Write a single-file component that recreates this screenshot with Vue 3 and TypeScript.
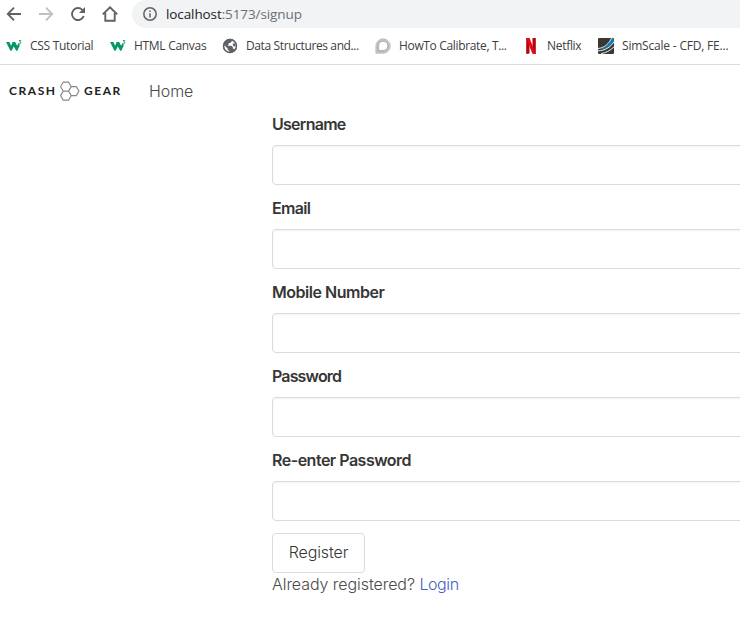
<script setup lang="ts">
interface Bookmark {
  icon: 'w3' | 'globe' | 'calibrate' | 'netflix' | 'simscale'
  label: string
  width: number
}

const bookmarks: Bookmark[] = [
  { icon: 'w3', label: 'CSS Tutorial', width: 104 },
  { icon: 'w3', label: 'HTML Canvas', width: 112 },
  { icon: 'globe', label: 'Data Structures and...', width: 153 },
  { icon: 'calibrate', label: 'HowTo Calibrate, T...', width: 148 },
  { icon: 'netflix', label: 'Netflix', width: 75 },
  { icon: 'simscale', label: 'SimScale - CFD, FE...', width: 148 },
]

const fields = [
  { id: 'username', label: 'Username', type: 'text' },
  { id: 'email', label: 'Email', type: 'email' },
  { id: 'mobile', label: 'Mobile Number', type: 'tel' },
  { id: 'password', label: 'Password', type: 'password' },
  { id: 'confirm', label: 'Re-enter Password', type: 'password' },
]
</script>

<template>
  <div class="window">
    <header class="toolbar">
      <div class="controls">
        <svg viewBox="0 0 16 16"><path d="M15 8H2M8 1.7 1.8 8 8 14.3" /></svg>
        <svg class="disabled" viewBox="0 0 16 16"><path d="M1 8h13M8 1.7 14.2 8 8 14.3" /></svg>
        <svg viewBox="0 0 16 16"><path d="M13.7 10a6 6 0 1 1-1.4-6.2L14 5.5" /><path class="solid" d="M15 1v6H9z" /></svg>
        <svg viewBox="0 0 16 16"><path d="M.8 8.4 8 1.3l7.2 7.1M3.3 7v7.7h9.4V7" /></svg>
      </div>
      <div class="address">
        <svg viewBox="0 0 14 14"><circle cx="7" cy="7" r="6.2" /><path d="M7 6.2v4.3M7 3.4v1.5" /></svg>
        <span class="url">localhost<span class="path">:5173/signup</span></span>
      </div>
    </header>

    <nav class="bookmarks">
      <a v-for="b in bookmarks" :key="b.label" class="bookmark" :style="{ width: b.width + 'px' }">
        <svg v-if="b.icon === 'w3'" viewBox="0 0 16 16">
          <path d="M0 4h3.4l1.7 3.8L6.6 4h2.6l1.9 3.7L12.6 5l1.2 2.4-2.5 5.3h-1.1L7.8 8.6 5.6 12.7H4.4z" fill="#059862" />
          <path d="M12.8 2.6h2.1l-1.2 1.3c1.9.1 1.5 2.4-.8 1.8" fill="none" stroke="#059862" stroke-width=".9" />
        </svg>
        <svg v-else-if="b.icon === 'globe'" viewBox="0 0 16 16">
          <circle cx="8" cy="8" r="7.2" fill="#5f6368" />
          <path d="M9.7 2.4v1.2L8.2 5H6.7v1.6L5.3 7.7h4.1l1.5 1.5v1.6h1.3l1 .8c2-3.4.5-8-3.5-9.2zM2.3 7.2l3.4 3.2v1.4l1.7 1.3v1.1C4.1 14 1.6 10.8 2.3 7.2z" fill="#fff" />
          <path d="M10.5 5.5h3v3h-2zM8.6 11l3.4.5-2.8 2.4z" fill="#5f6368" />
          <circle cx="8" cy="8" r="6.5" fill="none" stroke="#5f6368" stroke-width="1.4" />
        </svg>
        <svg v-else-if="b.icon === 'calibrate'" viewBox="0 0 16 16">
          <path d="M.9 15.2V7.8A7.2 7.2 0 1 1 8 15.2z" fill="#ccc" stroke="#b5b5b5" stroke-width=".8" />
          <path d="M2.9 13.2V8A5.1 5.1 0 1 1 8 13.2H2.9" fill="none" stroke="#999" stroke-width=".8" />
          <path d="M4.2 11.8V7.8A4 4 0 1 1 8.2 11.8z" fill="#fff" />
        </svg>
        <svg v-else-if="b.icon === 'netflix'" viewBox="0 0 16 16">
          <path d="M3.2 0h3.3v15.6l-3.3.4zM9.5 0h3.3v16l-3.3-.4z" fill="#b1060f" />
          <path d="M3.2 0h3.3l6.3 16-3.5-.4z" fill="#e50914" />
        </svg>
        <svg v-else viewBox="0 0 16 16">
          <rect width="16" height="16" rx="1" fill="#3b3735" />
          <path d="M1 11C8 10 11 6 14 0h2v4C12 10 7 12 1 11z" fill="#1478b3" />
          <path d="M0 10.5C7 9.8 11 5.5 13.6 0M0 12.8C7 12.6 12 9.6 16 3.8M3 15.6c5-.8 9-2.8 13-6.8" fill="none" stroke="#fff" stroke-width=".9" />
        </svg>
        <span :class="b.icon">{{ b.label }}</span>
      </a>
    </nav>

    <nav class="navbar">
      <a class="brand">
        <span class="crash">CRASH</span>
        <svg viewBox="0 0 20 20">
          <path d="m3.2 1.1 5.4 0 2.7 4.6-2.7 4.4H3.2L.6 5.7zM3.2 10.1h5.4l2.7 4.5-2.7 4.5H3.2L.6 14.6zM11.1 5.6h5.3l2.6 4.5-2.6 4.5h-5.3l-2.5-4.5z" />
        </svg>
        <span class="gear">GEAR</span>
      </a>
      <a class="home">Home</a>
    </nav>

    <main class="signup">
      <form @submit.prevent>
        <div v-for="f in fields" :key="f.id" class="field">
          <label :for="f.id"><span :class="['caption', f.id]">{{ f.label }}</span></label>
          <input :id="f.id" :type="f.type" />
        </div>
        <button type="submit">Register</button>
      </form>
      <p><span class="already">Already registered?</span> <a class="login">Login</a></p>
    </main>
  </div>
</template>

<style>
body {
  margin: 0;
  overflow: hidden;
  background: #fff;
}
</style>

<style scoped>
.window {
  width: 740px;
  height: 644px;
  overflow: hidden;
  background: #fff;
  color: #4a4a4a;
  font: 300 16px/24px Inter, sans-serif;
}
svg {
  display: block;
  flex: none;
}
.toolbar {
  display: flex;
  height: 28px;
}
.controls {
  display: flex;
  align-items: center;
  gap: 16px;
  width: 126px;
  padding-left: 6px;
}
.controls svg {
  width: 16px;
  height: 16px;
  fill: none;
  stroke: #5f6368;
  stroke-width: 1.9;
}
.controls .disabled {
  stroke: #bdc1c6;
}
.controls .solid {
  fill: #5f6368;
  stroke: none;
}
.address {
  display: flex;
  flex: 1;
  align-items: center;
  gap: 9px;
  padding-left: 11px;
  border-radius: 14px 0 0 14px;
  background: #f1f3f4;
}
.address svg {
  width: 14px;
  height: 14px;
  fill: none;
  stroke: #5f6368;
  stroke-width: 1.5;
}
.url {
  color: #202124;
  font: 400 13.5px/20px "Open Sans", sans-serif;
  letter-spacing: -0.1px;
}
.path {
  color: #6b6f74;
}
.bookmarks {
  display: flex;
  box-sizing: border-box;
  height: 37px;
  padding-left: 6px;
  border-bottom: 1px solid #dadce0;
}
.bookmark {
  display: flex;
  flex: none;
  align-items: center;
  gap: 8px;
  height: 36px;
  color: #3c4043;
  font: 400 12px/16px "Open Sans", sans-serif;
  letter-spacing: -0.3px;
  white-space: nowrap;
}
.bookmark svg {
  width: 16px;
  height: 16px;
}
.bookmark .globe {
  letter-spacing: -0.38px;
}
.bookmark .calibrate {
  letter-spacing: -0.34px;
}
.bookmark .simscale {
  letter-spacing: -0.2px;
}
.navbar {
  display: flex;
  align-items: center;
  height: 51px;
  margin-bottom: -4px;
  padding-left: 9px;
}
.brand {
  display: flex;
  align-items: center;
  width: 140px;
  color: #222;
  font: 700 12px/20px Lato, sans-serif;
  letter-spacing: 1.55px;
}
.brand svg {
  width: 20px;
  height: 20px;
  margin: 0 4px 0 2px;
  fill: none;
  stroke: #888;
  stroke-width: 1.1;
}
.crash {
  width: 49px;
}
.home {
  letter-spacing: -0.1px;
}
.signup {
  width: 600px;
  padding-left: 272px;
}
.field {
  margin-bottom: 12px;
}
label {
  display: block;
  height: 24px;
  margin-bottom: 9px;
  color: #363636;
  font-weight: 600;
  letter-spacing: -0.5px;
}
.field + .field label {
  margin-top: -1px;
}
.field {
  padding-top: 0;
}
.username {
  letter-spacing: -0.72px;
}
.email {
  letter-spacing: -0.65px;
}
.mobile {
  letter-spacing: -0.48px;
}
.password {
  letter-spacing: -0.85px;
}
input {
  display: block;
  box-sizing: border-box;
  width: 100%;
  height: 40px;
  border: 1px solid #dbdbdb;
  border-radius: 4px;
  outline: none;
  box-shadow: inset 0 1px 2px rgba(10, 10, 10, 0.05);
}
button {
  display: block;
  box-sizing: border-box;
  width: 93px;
  height: 40px;
  padding: 0 0 2px;
  border: 1px solid #dbdbdb;
  border-radius: 4px;
  background: #fff;
  color: #363636;
  font: 300 16px/24px Inter, sans-serif;
  letter-spacing: -0.1px;
}
p {
  margin: -1px 0 0;
}
.already {
  letter-spacing: -0.06px;
}
.login {
  color: #485fc7;
  letter-spacing: -0.4px;
}
</style>
